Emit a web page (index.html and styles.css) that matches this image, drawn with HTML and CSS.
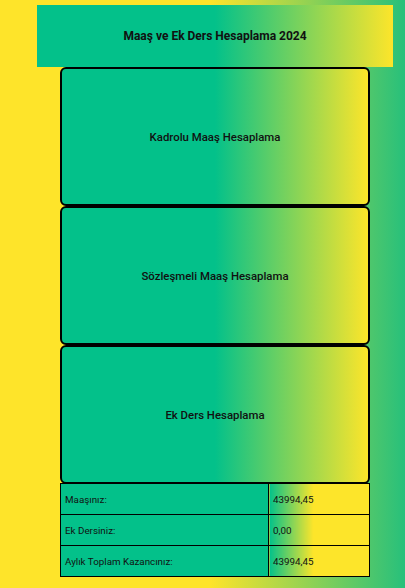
FILE: index.html
```html
<!DOCTYPE html>
<html lang="tr">
<head>
<meta charset="utf-8">
<title>Maaş ve Ek Ders Hesaplama 2024</title>
<link rel="stylesheet" href="styles.css">
</head>
<body>
<div class="page">
  <header class="header">
    <h1 class="title">Maaş ve Ek Ders Hesaplama 2024</h1>
  </header>
  <main class="content">
    <div class="card">Kadrolu Maaş Hesaplama</div>
    <div class="card">Sözleşmeli Maaş Hesaplama</div>
    <div class="card">Ek Ders Hesaplama</div>
    <table class="summary">
      <tr><td class="label">Maaşınız:</td><td class="value">43994,45</td></tr>
      <tr><td class="label">Ek Dersiniz:</td><td class="value">0,00</td></tr>
      <tr><td class="label">Aylık Toplam Kazancınız:</td><td class="value">43994,45</td></tr>
    </table>
  </main>
</div>
</body>
</html>
```
FILE: styles.css
```css
html, body {
  margin: 0;
  padding: 0;
  height: 100%;
}
body {
  font-family: Roboto, "Liberation Sans", sans-serif;
  color: #111;
  background: linear-gradient(to right, #fee42a 52%, #27c07b 100%);
  min-height: 588px;
}
.page {
  padding: 5px 12px 0 37px;
}
.header {
  height: 62px;
  display: flex;
  align-items: center;
  justify-content: center;
  background: linear-gradient(to right, #03c18a 50%, #fde52a 100%);
}
.title {
  margin: 0;
  font-size: 12px;
  font-weight: 700;
}
.content {
  width: 310px;
  margin: 0 auto;
  display: flex;
  flex-direction: column;
}
.card {
  box-sizing: border-box;
  height: 139px;
  border: 2px solid #000;
  border-radius: 6px;
  display: flex;
  align-items: center;
  justify-content: center;
  font-size: 11.4px;
  font-weight: 500;
  background: linear-gradient(to right, #03c18a 50%, #fde52a 100%);
}
.summary {
  width: 310px;
  border-collapse: collapse;
  font-size: 9.8px;
  margin-top: -1px;
}
.summary td {
  height: 31px;
  box-sizing: border-box;
  padding: 0 4px;
  border: 1px solid #000;
}
.label {
  width: 208px;
  background: #03c18a;
}
.value {
  background: linear-gradient(to right, #03c18a 0%, #fde52a 44%);
}
```
